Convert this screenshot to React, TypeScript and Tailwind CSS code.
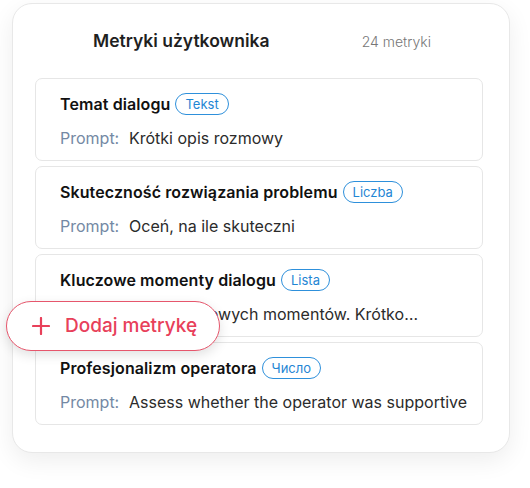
type Metric = {
    title: string
    type: string
    prompt: string
}

const metrics: Metric[] = [
    { title: "Temat dialogu", type: "Tekst", prompt: "Krótki opis rozmowy" },
    { title: "Skuteczność rozwiązania problemu", type: "Liczba", prompt: "Oceń, na ile skuteczni" },
    { title: "Kluczowe momenty dialogu", type: "Lista", prompt: "Lista kluczowych momentów. Krótko…" },
    { title: "Profesjonalizm operatora", type: "Число", prompt: "Assess whether the operator was supportive" },
]

function MetricRow({ metric }: { metric: Metric }) {
    return (
        <div className="h-[83px] rounded-[7px] border border-[#e6e6e6] bg-white px-6 pt-[13px]">
            <div className="flex items-center gap-[5px]">
                <span className="text-[16px] font-semibold tracking-[0.1px] text-[#111]">{metric.title}</span>
                <span className="rounded-full border border-[#2e90db] px-[9px] py-[1px] text-[13px] leading-[18px] text-[#1f86d4]">
                    {metric.type}
                </span>
            </div>
            <div className="mt-[12px] flex text-[16px] leading-[20px]">
                <span className="w-[69px] shrink-0 text-[#7489a4]">Prompt:</span>
                <span className="whitespace-nowrap text-[#2b2b2b]">{metric.prompt}</span>
            </div>
        </div>
    )
}

export default function App() {
    return (
        <div className="relative h-[488px] w-[530px] bg-white font-['Inter',sans-serif]">
            <div className="absolute left-[12px] top-[3px] h-[450px] w-[498px] rounded-[20px] border border-[#e8e8e8] bg-white pl-[22px] pr-[26px] shadow-[0_8px_24px_rgba(0,0,0,0.07)]">
                <div className="flex h-[74px] items-center justify-between pl-[58px] pr-[52px]">
                    <h2 className="text-[17.5px] font-semibold text-[#1f1f1f]">Metryki użytkownika</h2>
                    <span className="text-[14px] font-light text-[#777]">24 metryki</span>
                </div>
                <div className="flex flex-col gap-[5px]">
                    {metrics.map((m) => (
                        <MetricRow key={m.title} metric={m} />
                    ))}
                </div>
            </div>

            <button className="absolute left-[6px] top-[301px] flex h-[50px] w-[214px] items-center gap-[15px] rounded-full border border-[#e6566c] bg-white pl-[25px] shadow-[0_4px_12px_rgba(0,0,0,0.12)]">
                <svg width="18" height="18" viewBox="0 0 18 18" className="text-[#e8405a]">
                    <path d="M9 1v16M1 9h16" stroke="currentColor" strokeWidth="2.2" strokeLinecap="round" />
                </svg>
                <span className="text-[19px] font-medium text-[#e8405a]">Dodaj metrykę</span>
            </button>
        </div>
    )
}
